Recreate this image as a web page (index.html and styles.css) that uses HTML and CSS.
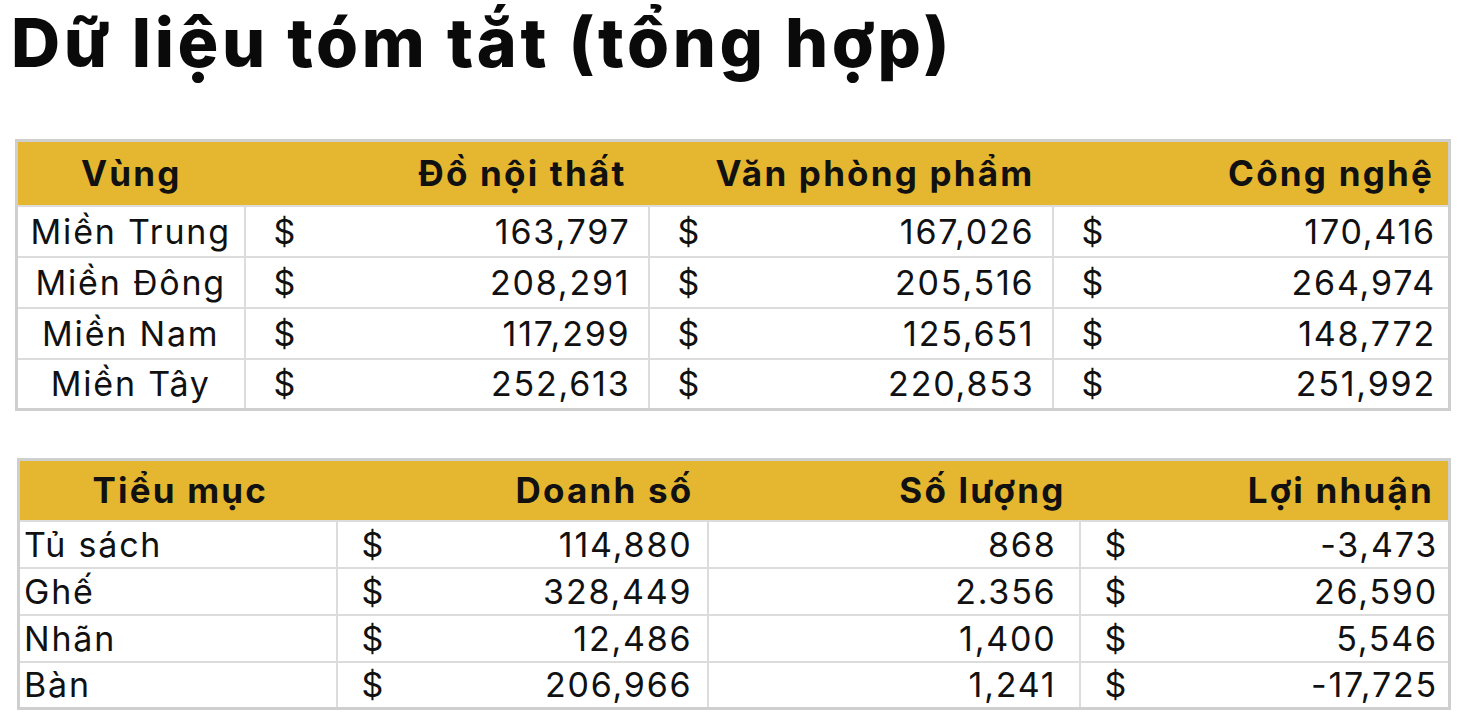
FILE: index.html
```html
<!DOCTYPE html>
<html lang="vi">
<head>
<meta charset="utf-8">
<title>Dữ liệu tóm tắt (tổng hợp)</title>
<link rel="stylesheet" href="styles.css">
</head>
<body>
<main class="page">
  <header class="title-wrap">
    <h1 class="title">Dữ liệu tóm tắt (tổng hợp)</h1>
  </header>

  <table class="sheet sheet-region">
    <colgroup>
      <col class="c-region"><col class="c-money"><col class="c-money"><col class="c-money-last">
    </colgroup>
    <thead>
      <tr>
        <th class="center">Vùng</th>
        <th class="right h1">Đồ nội thất</th>
        <th class="right h2">Văn phòng phẩm</th>
        <th class="right h3">Công nghệ</th>
      </tr>
    </thead>
    <tbody>
      <tr><td class="center">Miền Trung</td><td><div class="acc"><span>$</span><span>163,797</span></div></td><td><div class="acc"><span>$</span><span>167,026</span></div></td><td class="last"><div class="acc"><span>$</span><span>170,416</span></div></td></tr>
      <tr><td class="center">Miền Đông</td><td><div class="acc"><span>$</span><span>208,291</span></div></td><td><div class="acc"><span>$</span><span>205,516</span></div></td><td class="last"><div class="acc"><span>$</span><span>264,974</span></div></td></tr>
      <tr><td class="center">Miền Nam</td><td><div class="acc"><span>$</span><span>117,299</span></div></td><td><div class="acc"><span>$</span><span>125,651</span></div></td><td class="last"><div class="acc"><span>$</span><span>148,772</span></div></td></tr>
      <tr><td class="center">Miền Tây</td><td><div class="acc"><span>$</span><span>252,613</span></div></td><td><div class="acc"><span>$</span><span>220,853</span></div></td><td class="last"><div class="acc"><span>$</span><span>251,992</span></div></td></tr>
    </tbody>
  </table>

  <table class="sheet sheet-item">
    <colgroup>
      <col class="c-item"><col class="c-sales"><col class="c-qty"><col class="c-profit">
    </colgroup>
    <thead>
      <tr>
        <th class="center">Tiểu mục</th>
        <th class="right">Doanh số</th>
        <th class="right">Số lượng</th>
        <th class="right">Lợi nhuận</th>
      </tr>
    </thead>
    <tbody>
      <tr><td class="left">Tủ sách</td><td><div class="acc"><span>$</span><span>114,880</span></div></td><td class="right">868</td><td class="last"><div class="acc"><span>$</span><span>-3,473</span></div></td></tr>
      <tr><td class="left">Ghế</td><td><div class="acc"><span>$</span><span>328,449</span></div></td><td class="right">2.356</td><td class="last"><div class="acc"><span>$</span><span>26,590</span></div></td></tr>
      <tr><td class="left">Nhãn</td><td><div class="acc"><span>$</span><span>12,486</span></div></td><td class="right">1,400</td><td class="last"><div class="acc"><span>$</span><span>5,546</span></div></td></tr>
      <tr><td class="left">Bàn</td><td><div class="acc"><span>$</span><span>206,966</span></div></td><td class="right">1,241</td><td class="last"><div class="acc"><span>$</span><span>-17,725</span></div></td></tr>
    </tbody>
  </table>
</main>
</body>
</html>
```

FILE: styles.css
```css
html, body {
  margin: 0;
  padding: 0;
  background: #ffffff;
}

body {
  font-family: "Inter", "Noto Sans", "DejaVu Sans", sans-serif;
  color: #111111;
}

.page {
  width: 1472px;
  height: 720px;
  overflow: hidden;
  box-sizing: border-box;
  padding: 0 0 0 15px;
}

.title-wrap {
  height: 139px;
  margin-left: -4px;
}

.title {
  display: inline-block;
  margin: 0;
  padding: 0 8px 0 0;
  font-size: 68px;
  line-height: 84px;
  font-weight: 800;
  letter-spacing: 3.6px;
  white-space: nowrap;
  color: #0a0a0a;
}

.sheet {
  border-collapse: collapse;
  table-layout: fixed;
  border: 3px solid #cfcfcf;
  font-size: 34px;
}

.sheet th {
  background: #e5b730;
  font-weight: 700;
  font-size: 35px;
  padding: 0 18px;
  white-space: nowrap;
  letter-spacing: 2.2px;
}

.sheet td {
  border: 2px solid #dcdcdc;
  padding: 0 17px 0 28px;
  white-space: nowrap;
  font-weight: 400;
  letter-spacing: 1.8px;
}

.sheet td.last { padding-right: 12px; }
.sheet td.center { padding: 0 4px; }
.sheet td.left { padding: 0 4px; }

.center { text-align: center; }
.right { text-align: right; }
.left { text-align: left; }

.acc {
  display: flex;
  justify-content: space-between;
  align-items: center;
}

/* region table */
.sheet-region { width: 1433px; }
.sheet-region .c-region { width: 228px; }
.sheet-region .c-money { width: 404px; }
.sheet-region .c-money-last { width: 397px; }
.sheet-region thead tr { height: 65px; }
.sheet-region tbody tr { height: 51px; }
.sheet-region th.h1 { padding-right: 22px; }
.sheet-region th.h2 { padding-right: 18px; }
.sheet-region th.h3 { padding-right: 14px; }

/* item table */
.sheet-item {
  width: 1431px;
  margin: 47px 0 0 2px;
}
.sheet-item .c-item { width: 318px; }
.sheet-item .c-sales { width: 371px; }
.sheet-item .c-qty { width: 372px; }
.sheet-item .c-profit { width: 370px; }
.sheet-item thead tr { height: 61px; }
.sheet-item tbody tr { height: 47px; }
.sheet-item th { padding-right: 14px; }
.sheet-item td { padding-left: 24px; padding-right: 14px; }
.sheet-item td.last { padding-right: 10px; }
.sheet-item td.left { padding-left: 4px; }
.sheet-item td.right { padding-right: 22px; }
```
